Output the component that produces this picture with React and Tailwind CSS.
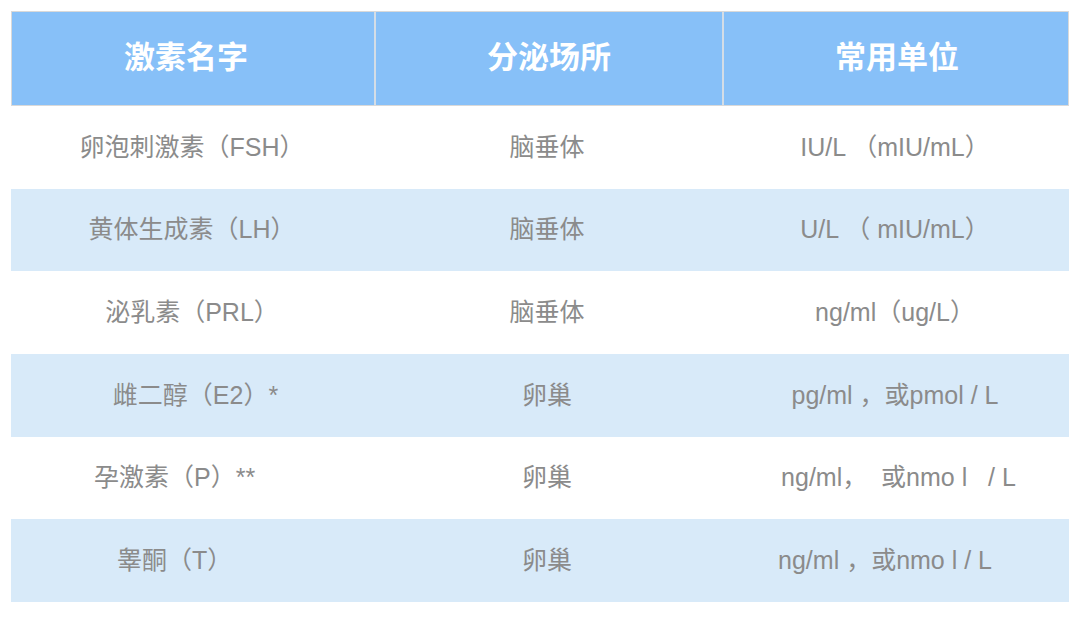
import React from "react";

const rows = [
  ["卵泡刺激素（FSH）", "脑垂体", "IU/L （mIU/mL）"],
  ["黄体生成素（LH）", "脑垂体", "U/L （ mIU/mL）"],
  ["泌乳素（PRL）", "脑垂体", "ng/ml（ug/L）"],
  [" 雌二醇（E2）*", "卵巢", "pg/ml ，或pmol / L"],
  ["孕激素（P）**     ", "卵巢", " ng/ml，  或nmo l   / L"],
  ["睾酮（T）     ", "卵巢", "ng/ml ，或nmo l / L   "],
];

const font = { fontFamily: '"Liberation Sans", "Noto Sans CJK SC", sans-serif' };

export default function App() {
  return (
    <div className="w-[1080px] h-[620px] bg-white pt-[11px] pl-[11px]" style={font}>
      <div className="w-[1058px]">
        <div className="grid grid-cols-[362px_348px_348px] h-[95px] border border-[#d9d9d9] bg-[#87c0f8]">
          {["激素名字", "分泌场所", "常用单位"].map((h, i) => (
            <div
              key={h}
              className={`flex items-center justify-center text-white font-bold text-[31px] ${i > 0 ? "border-l-2 border-[#d4dde6]" : "pr-[14px]"}`}
            >
              {h}
            </div>
          ))}
        </div>
        {rows.map((r, i) => (
          <div
            key={i}
            className={`grid grid-cols-[362px_348px_348px] h-[82.7px] ${i % 2 ? "bg-[#d8eaf9]" : "bg-white"}`}
          >
            {r.map((c, j) => (
              <div
                key={j}
                className="flex items-center justify-center text-[#8b8b8b] text-[25px] whitespace-pre"
              >
                {c}
              </div>
            ))}
          </div>
        ))}
      </div>
    </div>
  );
}
